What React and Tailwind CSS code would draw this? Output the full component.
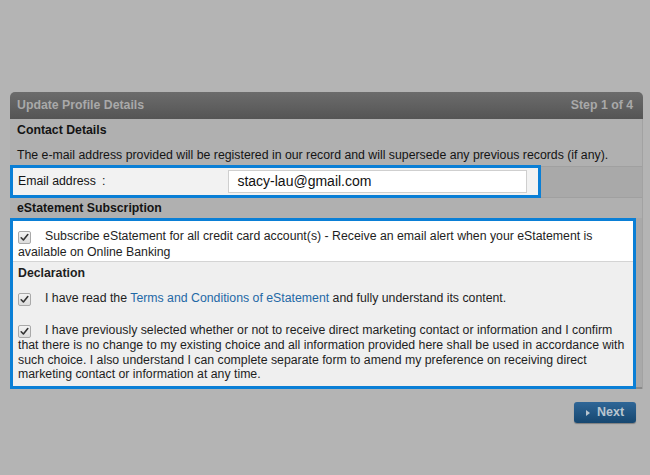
import React from "react";

function Check() {
  return (
    <span className="inline-flex items-center justify-center w-[13px] h-[13px] rounded-[2px] border border-[#a9a9a9] bg-gradient-to-b from-[#f3f3f3] to-[#dcdcdc] align-[-2px]">
      <svg width="9" height="9" viewBox="0 0 9 9">
        <path d="M1.2 4.8 L3.4 7 L7.8 1.6" fill="none" stroke="#333" strokeWidth="1.6" strokeLinecap="round" strokeLinejoin="round" />
      </svg>
    </span>
  );
}

export default function App() {
  return (
    <div className="w-[650px] h-[475px] bg-[#b4b4b4] pt-[92px] pl-[10px] text-[12.3px] text-[#141414]" style={{ fontFamily: '"Liberation Sans", Arial, sans-serif' }}>
      <div className="w-[633px]">
        <div className="h-[27px] rounded-t-[5px] bg-gradient-to-b from-[#6c6c6c] to-[#555555] flex items-center justify-between px-[7px] text-[#a9a9a9] font-bold text-[12.3px]">
          <span>Update Profile Details</span>
          <span className="pr-[3px]">Step 1 of 4</span>
        </div>
        <div className="bg-[#b0b0b0] border-r border-[#a2a2a2]">
          <div className="h-[23px] flex items-center pl-[7px] font-bold">Contact Details</div>
          <div className="h-[23px] flex items-end pb-[1px] pl-[7px]">The e-mail address provided will be registered in our record and will supersede any previous records (if any).</div>
          <div className="flex h-[33px]">
            <div className="w-[531px] border-[3px] border-[#0a7fd6] bg-[#f2f2f2] flex items-center pl-[5px]">
              <span className="w-[80px]">Email address</span>
              <span className="ml-[4px]">:</span>
              <div className="ml-[123px] w-[299px] h-[23px] bg-white border border-[#cfcfcf] flex items-center pl-[8px] text-[14px] text-[#111]">stacy-lau@gmail.com</div>
            </div>
            <div className="flex-1 bg-[#a9a9a9] border-t border-b border-[#a0a0a0] mt-[1px]"></div>
          </div>
          <div className="h-[20px] flex items-center pl-[7px] font-bold">eStatement Subscription</div>
          <div className="flex">
            <div className="w-[626px] border-[3px] border-[#0a7fd6] bg-[#efefef]">
              <div className="bg-white border-b border-[#d4d4d4] pl-[5px] pr-[4px] pt-[7px] pb-[1px] leading-[16px] text-[#1e1e1e]">
                <Check />
                <span className="ml-[14px]">Subscribe eStatement for all credit card account(s) - Receive an email alert when your eStatement is available on Online Banking</span>
              </div>
              <div className="pl-[5px] text-[#1e1e1e]">
                <div className="h-[22px] flex items-center font-bold">Declaration</div>
                <div className="pt-[7px] leading-[15px]">
                  <Check />
                  <span className="ml-[14px]">I have read the <span className="text-[#1f69a6]">Terms and Conditions of eStatement</span> and fully understand its content.</span>
                </div>
                <div className="pt-[17px] pb-[4px] pr-[4px] leading-[14.7px]">
                  <Check />
                  <span className="ml-[14px]">I have previously selected whether or not to receive direct marketing contact or information and I confirm that there is no change to my existing choice and all information provided here shall be used in accordance with such choice. I also understand I can complete separate form to amend my preference on receiving direct marketing contact or information at any time.</span>
                </div>
              </div>
            </div>
            <div className="flex-1 bg-[#a9a9a9] border-b-2 border-[#8a8a8a]"></div>
          </div>
        </div>
        <div className="flex justify-end pt-[13px] pr-[7px]">
          <div className="w-[62px] h-[21px] rounded-[3px] bg-gradient-to-b from-[#2f6697] to-[#164770] shadow-[0_1px_1px_rgba(0,0,0,0.3)] flex items-center pl-[12px] gap-[7px] text-[#b9c5cf] font-bold text-[12.5px]">
            <svg width="4" height="6" viewBox="0 0 4 6"><path d="M0 0 L4 3 L0 6 Z" fill="#b9c5cf" /></svg>
            <span>Next</span>
          </div>
        </div>
      </div>
    </div>
  );
}
